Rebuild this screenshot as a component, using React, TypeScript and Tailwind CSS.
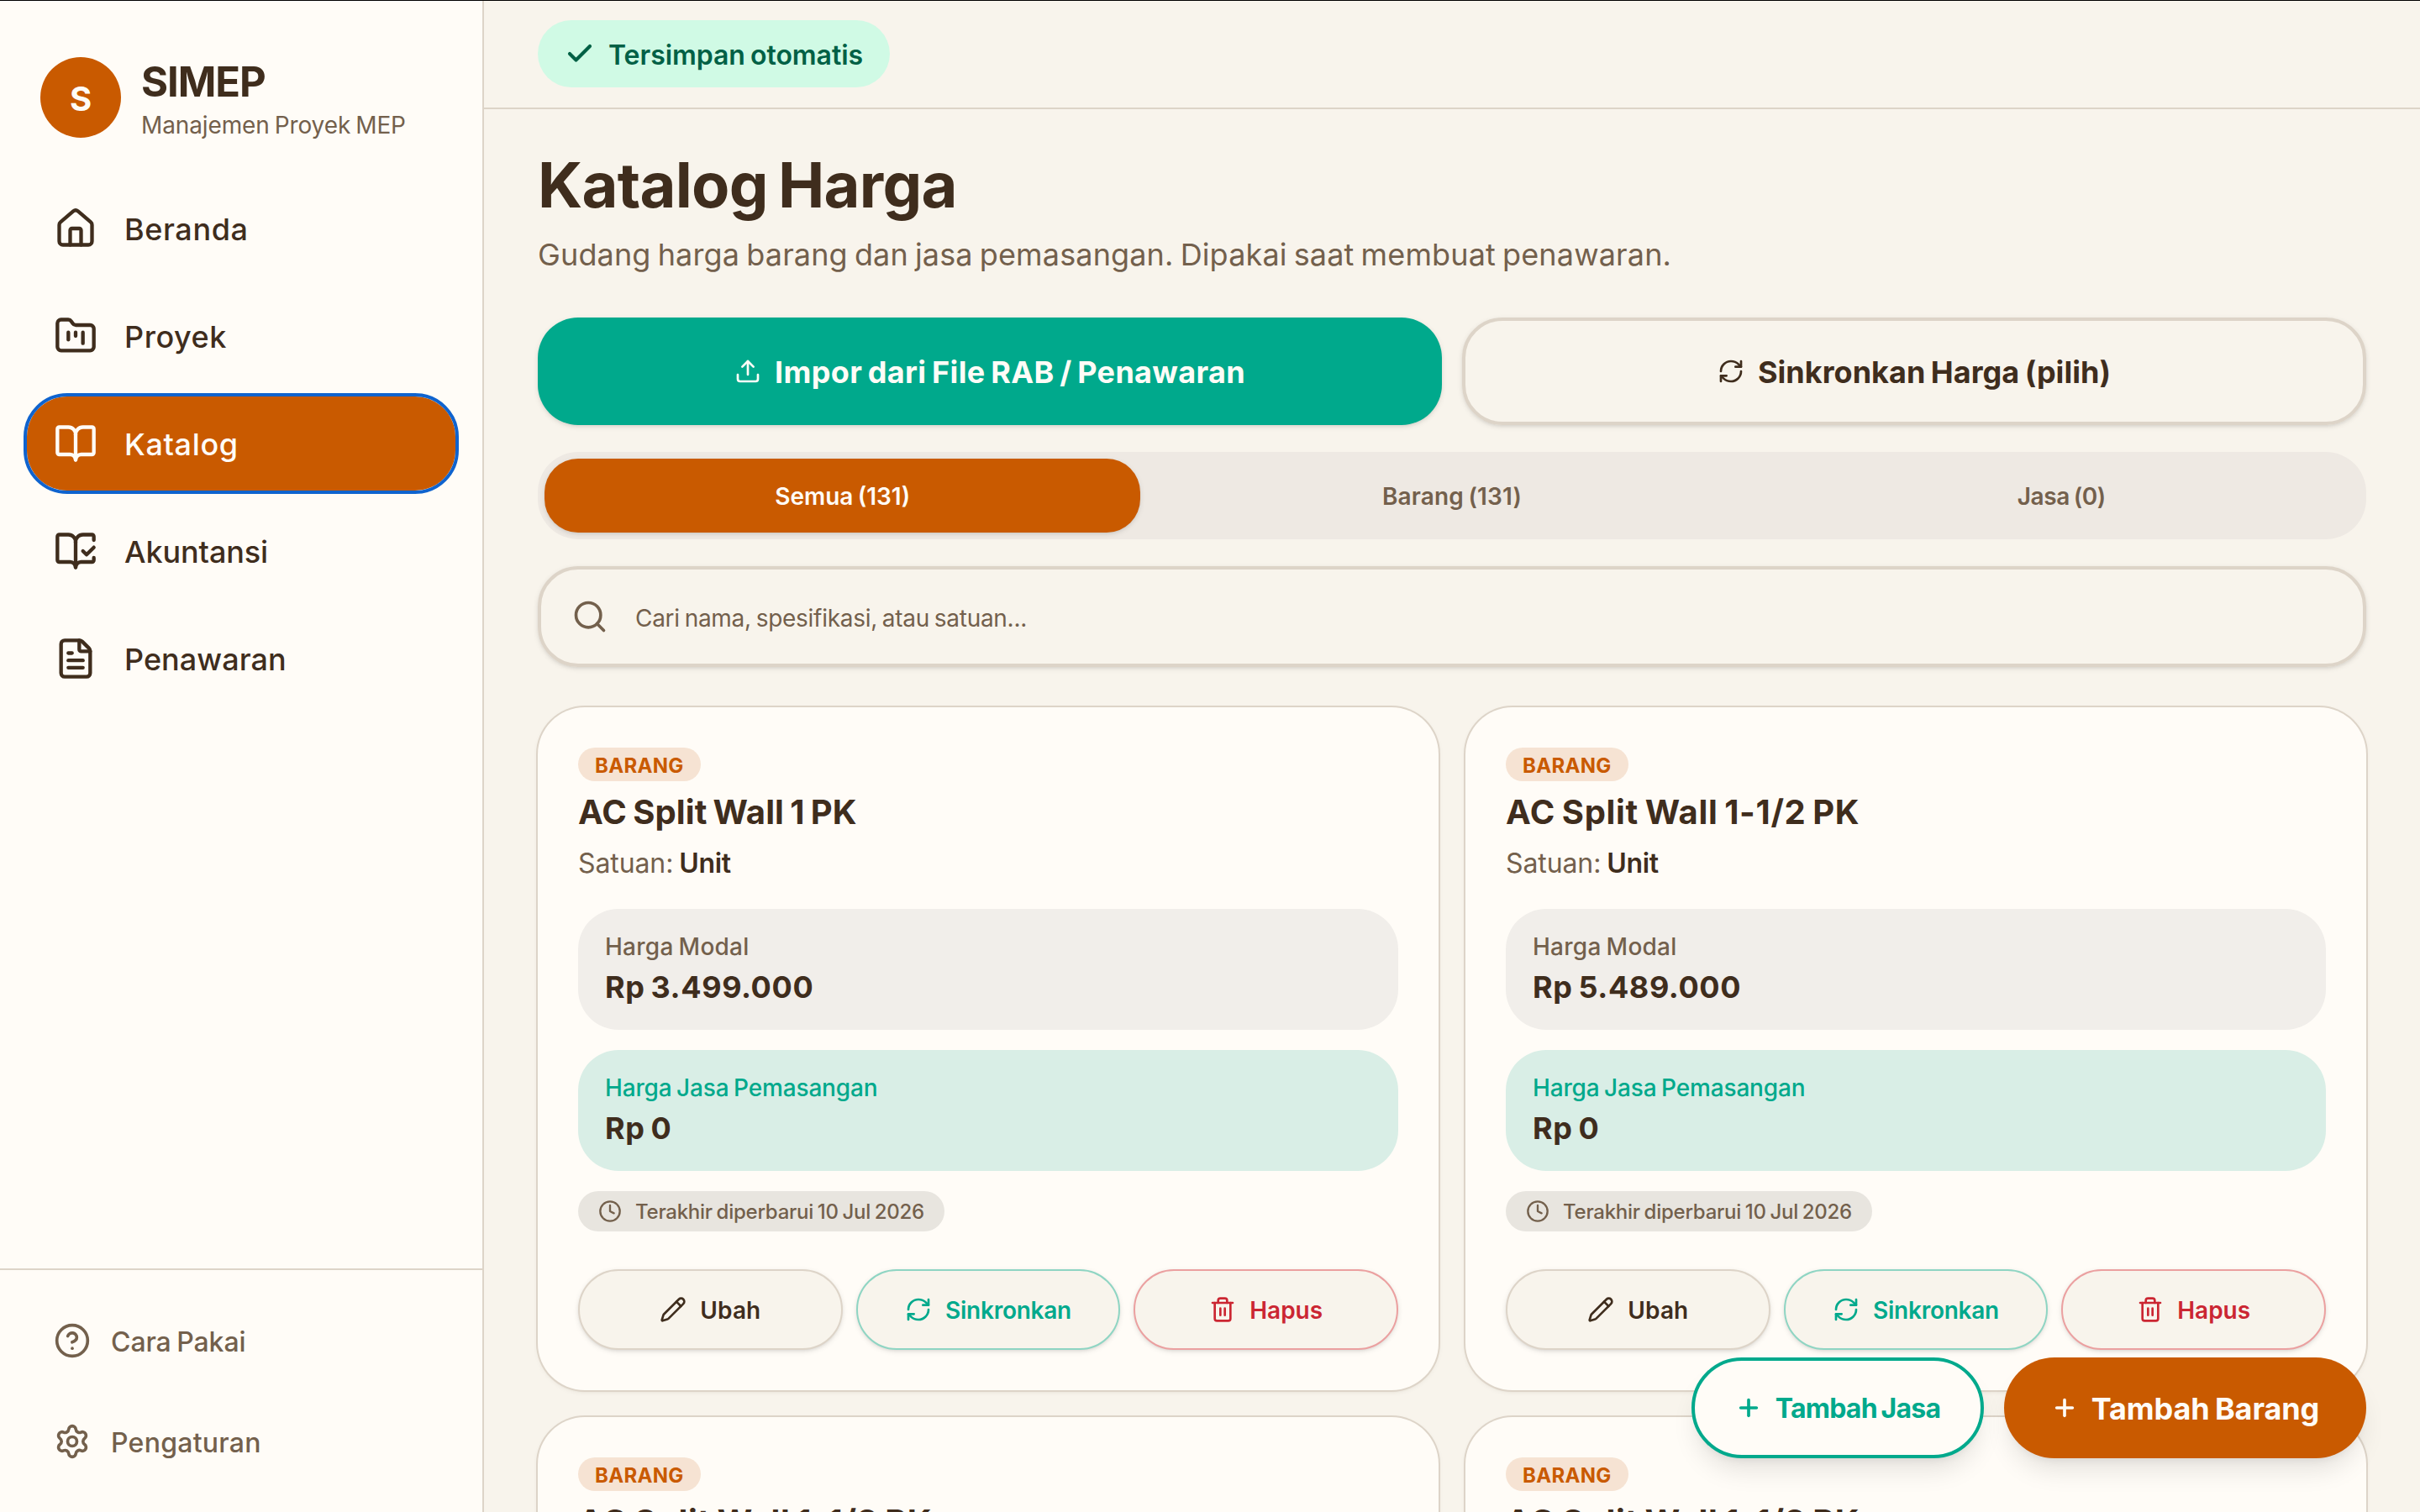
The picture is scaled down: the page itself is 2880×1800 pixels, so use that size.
import React from "react";
import {
  BookOpen,
  BookOpenCheck,
  Check,
  CircleQuestionMark,
  Clock,
  FileText,
  FolderKanban,
  House,
  Pencil,
  Plus,
  RefreshCw,
  Search,
  Settings,
  Trash2,
  Upload,
} from "lucide-react";

interface CatalogItem {
  id: number;
  name: string;
  nameClass: string;
  unit: string;
  cost: string;
  install: string;
  updatedAt: string;
}

const navLinks = [
  { label: "Beranda", icon: House, tracking: "tracking-[0.6px]" },
  { label: "Proyek", icon: FolderKanban, tracking: "tracking-[0.55px]" },
  { label: "Katalog", icon: BookOpen, tracking: "tracking-[0.65px]", active: true },
  { label: "Akuntansi", icon: BookOpenCheck, tracking: "tracking-[-0.1px]" },
  { label: "Penawaran", icon: FileText, tracking: "tracking-[0.05px]" },
];

const footerLinks = [
  { label: "Cara Pakai", icon: CircleQuestionMark, tracking: "tracking-[-0.09px]" },
  { label: "Pengaturan", icon: Settings, tracking: "tracking-[0.25px]" },
];

const tabs = [
  { label: "Semua (131)", tracking: "tracking-[0px]", active: true },
  { label: "Barang (131)", tracking: "tracking-[0.15px]" },
  { label: "Jasa (0)", tracking: "tracking-[-0.44px]" },
];

const items: CatalogItem[] = [
  {
    id: 1,
    name: "AC Split Wall 1 PK",
    nameClass: "tracking-[0.1px]",
    unit: "Unit",
    cost: "Rp 3.499.000",
    install: "Rp 0",
    updatedAt: "10 Jul 2026",
  },
  {
    id: 2,
    name: "AC Split Wall 1-1/2 PK",
    nameClass: "tracking-[0.67px]",
    unit: "Unit",
    cost: "Rp 5.489.000",
    install: "Rp 0",
    updatedAt: "10 Jul 2026",
  },
  {
    id: 3,
    name: "AC Split Wall 1-1/2 PK",
    nameClass: "tracking-[0.67px]",
    unit: "Unit",
    cost: "Rp 5.489.000",
    install: "Rp 0",
    updatedAt: "10 Jul 2026",
  },
  {
    id: 4,
    name: "AC Split Wall 1-1/2 PK",
    nameClass: "tracking-[0.67px]",
    unit: "Unit",
    cost: "Rp 5.489.000",
    install: "Rp 0",
    updatedAt: "10 Jul 2026",
  },
];

function Sidebar() {
  return (
    <aside className="flex h-full w-[576px] shrink-0 flex-col border-r-2 border-[#ddd4c8] bg-[#fffcf7]">
      {/* Brand */}
      <div className="flex h-[216px] shrink-0 gap-6 px-12 pt-[68px]">
        <div className="flex size-24 items-center justify-center rounded-full bg-[#c95a00] pt-[3px] text-[40px] font-bold text-[#fffcf7]">
          S
        </div>
        <div className="pt-0.5">
          <div className="text-[49px] leading-14 font-bold tracking-[-1.06px]">SIMEP</div>
          <div className="mt-[3px] text-[28px] leading-10 tracking-[-0.12px] text-[#73604c]">
            Manajemen Proyek MEP
          </div>
        </div>
      </div>

      <nav className="flex flex-1 flex-col gap-4 px-8">
        {navLinks.map((link) => (
          <a
            key={link.label}
            href="#"
            className={`flex h-28 items-center gap-8 rounded-[48px] px-8 text-[36px] font-medium ${link.tracking} ${
              link.active ? "bg-[#c95a00] text-[#fffcf7] outline-4 outline-[#0f63ce]" : ""
            }`}
          >
            <link.icon className="size-13 shrink-0" />
            <span className="mt-px">{link.label}</span>
          </a>
        ))}
      </nav>

      <div className="flex flex-col gap-4 border-t-2 border-[#ddd4c8] p-8 text-[#73604c]">
        {footerLinks.map((link) => (
          <a
            key={link.label}
            href="#"
            className={`flex h-26 items-center gap-6 px-8 text-[32px] font-medium ${link.tracking}`}
          >
            <link.icon className="size-11 shrink-0" />
            <span className="mt-[3px]">{link.label}</span>
          </a>
        ))}
      </div>
    </aside>
  );
}

function ItemCard({ item }: { item: CatalogItem }) {
  return (
    <article className="rounded-[56px] bg-[#fffcf7] p-12 shadow-[0_2px_6px_rgba(63,45,29,0.08),0_2px_4px_-2px_rgba(63,45,29,0.1)] ring-2 ring-[#ddd4c8]">
      <div className="flex h-10 w-fit items-center rounded-full bg-[#f6e3d3] px-5 pt-[3px] text-[24px] leading-none font-bold tracking-[0.3px] text-[#c95a00]">
        BARANG
      </div>
      <h2 className={`mt-[11px] text-[40px] leading-13 font-bold ${item.nameClass}`}>{item.name}</h2>
      <p className="mt-[13px] text-[32px] leading-11 tracking-[-0.1px] text-[#73604c]">
        Satuan: <span className="font-semibold tracking-[-0.3px] text-[#3f2d1d]">{item.unit}</span>
      </p>

      <div className="mt-8 h-36 rounded-[48px] bg-[#f1eeea] pt-[25px] pl-8">
        <div className="text-[28px] leading-10 font-medium tracking-[0.25px] text-[#73604c]">Harga Modal</div>
        <div className="mt-1 text-[36px] leading-12 font-bold tracking-[0.6px]">{item.cost}</div>
      </div>

      <div className="mt-6 h-36 rounded-[48px] bg-[#d9eee6] pt-[25px] pl-8">
        <div className="text-[28px] leading-10 font-medium tracking-[-0.16px] text-[#00a98c]">
          Harga Jasa Pemasangan
        </div>
        <div className="mt-1 text-[36px] leading-12 font-bold tracking-[0.6px]">{item.install}</div>
      </div>

      <div className="mt-6 flex h-12 w-fit items-center gap-4 rounded-full bg-[#e8e5df] px-6 text-[24px] leading-none font-medium tracking-[-0.25px] text-[#73604c]">
        <Clock className="size-7" />
        <span className="mt-0.5">Terakhir diperbarui {item.updatedAt}</span>
      </div>

      <div className="mt-[45.4px] grid grid-cols-3 gap-4 text-[28px] font-semibold">
        <button className="flex h-24 items-center justify-center gap-4 rounded-full border-2 border-[#ddd4c8] bg-[#f8f4ec] shadow-[0_2px_6px_rgba(0,0,0,0.1),0_2px_4px_-2px_rgba(0,0,0,0.1)]">
          <Pencil className="size-8" />
          <span className="mt-px tracking-[0.1px]">Ubah</span>
        </button>
        <button className="flex h-24 items-center justify-center gap-4 rounded-full border-2 border-[#8fd5c3] bg-[#f8f4ec] text-[#00a98c] shadow-[0_2px_6px_rgba(0,0,0,0.1),0_2px_4px_-2px_rgba(0,0,0,0.1)]">
          <RefreshCw className="size-8" />
          <span className="mt-px tracking-[-0.25px]">Sinkronkan</span>
        </button>
        <button className="flex h-24 items-center justify-center gap-4 rounded-full border-2 border-[#eba0a0] bg-[#f8f4ec] text-[#cb2632] shadow-[0_2px_6px_rgba(0,0,0,0.1),0_2px_4px_-2px_rgba(0,0,0,0.1)]">
          <Trash2 className="size-8" />
          <span className="mt-px">Hapus</span>
        </button>
      </div>
    </article>
  );
}

export default function App() {
  return (
    <div className="relative flex h-[1800px] w-[2880px] overflow-hidden bg-[#f8f4ec] font-['Inter',sans-serif] text-[#3f2d1d] **:[word-spacing:-0.06em]">
      <Sidebar />

      <div className="flex min-w-0 flex-1 flex-col">
        <header className="flex h-[130px] shrink-0 items-center border-b-2 border-[#ddd4c8] px-16">
          <div className="flex h-20 items-center gap-4 rounded-full bg-[#d0fae5] px-8 text-[32px] font-semibold tracking-[-0.04px] text-[#006045]">
            <Check className="size-9" strokeWidth={2.75} />
            <span className="mt-[3px]">Tersimpan otomatis</span>
          </div>
        </header>

        <main className="flex-1 overflow-hidden px-16 pt-[46px]">
          <h1 className="text-[74px] leading-22 font-bold tracking-[-0.73px]">Katalog Harga</h1>
          <p className="mt-[11px] text-[36px] leading-14 tracking-[0.14px] text-[#73604c]">
            Gudang harga barang dan jasa pemasangan. Dipakai saat membuat penawaran.
          </p>

          {/* Bulk actions */}
          <div className="mt-[47px] grid grid-cols-2 gap-6 text-[36px] font-bold">
            <button className="flex h-32 items-center justify-center gap-4 rounded-[48px] bg-[#00a98c] text-[#fffcf7] shadow-[0_2px_6px_rgba(0,0,0,0.1),0_2px_4px_-2px_rgba(0,0,0,0.1)]">
              <Upload className="size-8" />
              <span className="mt-0.5 tracking-[0.33px]">Impor dari File RAB / Penawaran</span>
            </button>
            <button className="flex h-32 items-center justify-center gap-4 rounded-[48px] border-4 border-[#ddd4c8] shadow-[0_2px_6px_rgba(0,0,0,0.1),0_2px_4px_-2px_rgba(0,0,0,0.1)]">
              <RefreshCw className="size-8" />
              <span className="mt-0.5 tracking-[0.04px]">Sinkronkan Harga (pilih)</span>
            </button>
          </div>

          <div className="mt-8 grid h-26 grid-cols-3 gap-4 rounded-[48px] bg-[#eee9e3] p-2 text-[28px] font-semibold">
            {tabs.map((tab) => (
              <button
                key={tab.label}
                className={`rounded-[40px] pt-0.5 ${tab.tracking} ${
                  tab.active
                    ? "bg-[#c95a00] text-[#fffcf7] shadow-[0_2px_6px_rgba(0,0,0,0.1),0_2px_4px_-2px_rgba(0,0,0,0.1)]"
                    : "text-[#73604c]"
                }`}
              >
                {tab.label}
              </button>
            ))}
          </div>

          <div className="mt-8 flex h-30 items-center gap-8 rounded-[48px] border-4 border-[#ddd4c8] px-9 text-[#73604c] shadow-[0_2px_6px_rgba(0,0,0,0.1),0_2px_4px_-2px_rgba(0,0,0,0.1)]">
            <Search className="size-11" />
            <span className="mt-[3px] text-[28px] tracking-[-0.29px]">Cari nama, spesifikasi, atau satuan...</span>
          </div>

          <div className="mt-12 grid grid-cols-2 gap-8">
            {items.map((item) => (
              <ItemCard key={item.id} item={item} />
            ))}
          </div>
        </main>
      </div>

      {/* Floating add buttons */}
      <div className="absolute right-16 bottom-16 flex gap-6 font-bold">
        <button className="flex h-30 w-[348px] items-center justify-center gap-4 rounded-full border-4 border-[#00a98c] bg-[#fffcf7] text-[32px] text-[#00a98c] shadow-[0_20px_30px_-6px_rgba(0,0,0,0.1),0_8px_12px_-8px_rgba(0,0,0,0.1)]">
          <Plus className="size-8" strokeWidth={2.75} />
          <span className="mt-0.5 tracking-[-0.8px]">Tambah Jasa</span>
        </button>
        <button className="flex h-30 w-[431px] items-center justify-center gap-4 rounded-full bg-[#c95a00] text-[36px] text-[#fffcf7] shadow-[0_20px_30px_-6px_rgba(0,0,0,0.1),0_8px_12px_-8px_rgba(0,0,0,0.1)]">
          <Plus className="size-8" strokeWidth={2.75} />
          <span className="mt-0.5 tracking-[-0.1px]">Tambah Barang</span>
        </button>
      </div>

      {/* Window edge */}
      <div className="absolute inset-x-0 top-0 h-px bg-black" />
    </div>
  );
}
